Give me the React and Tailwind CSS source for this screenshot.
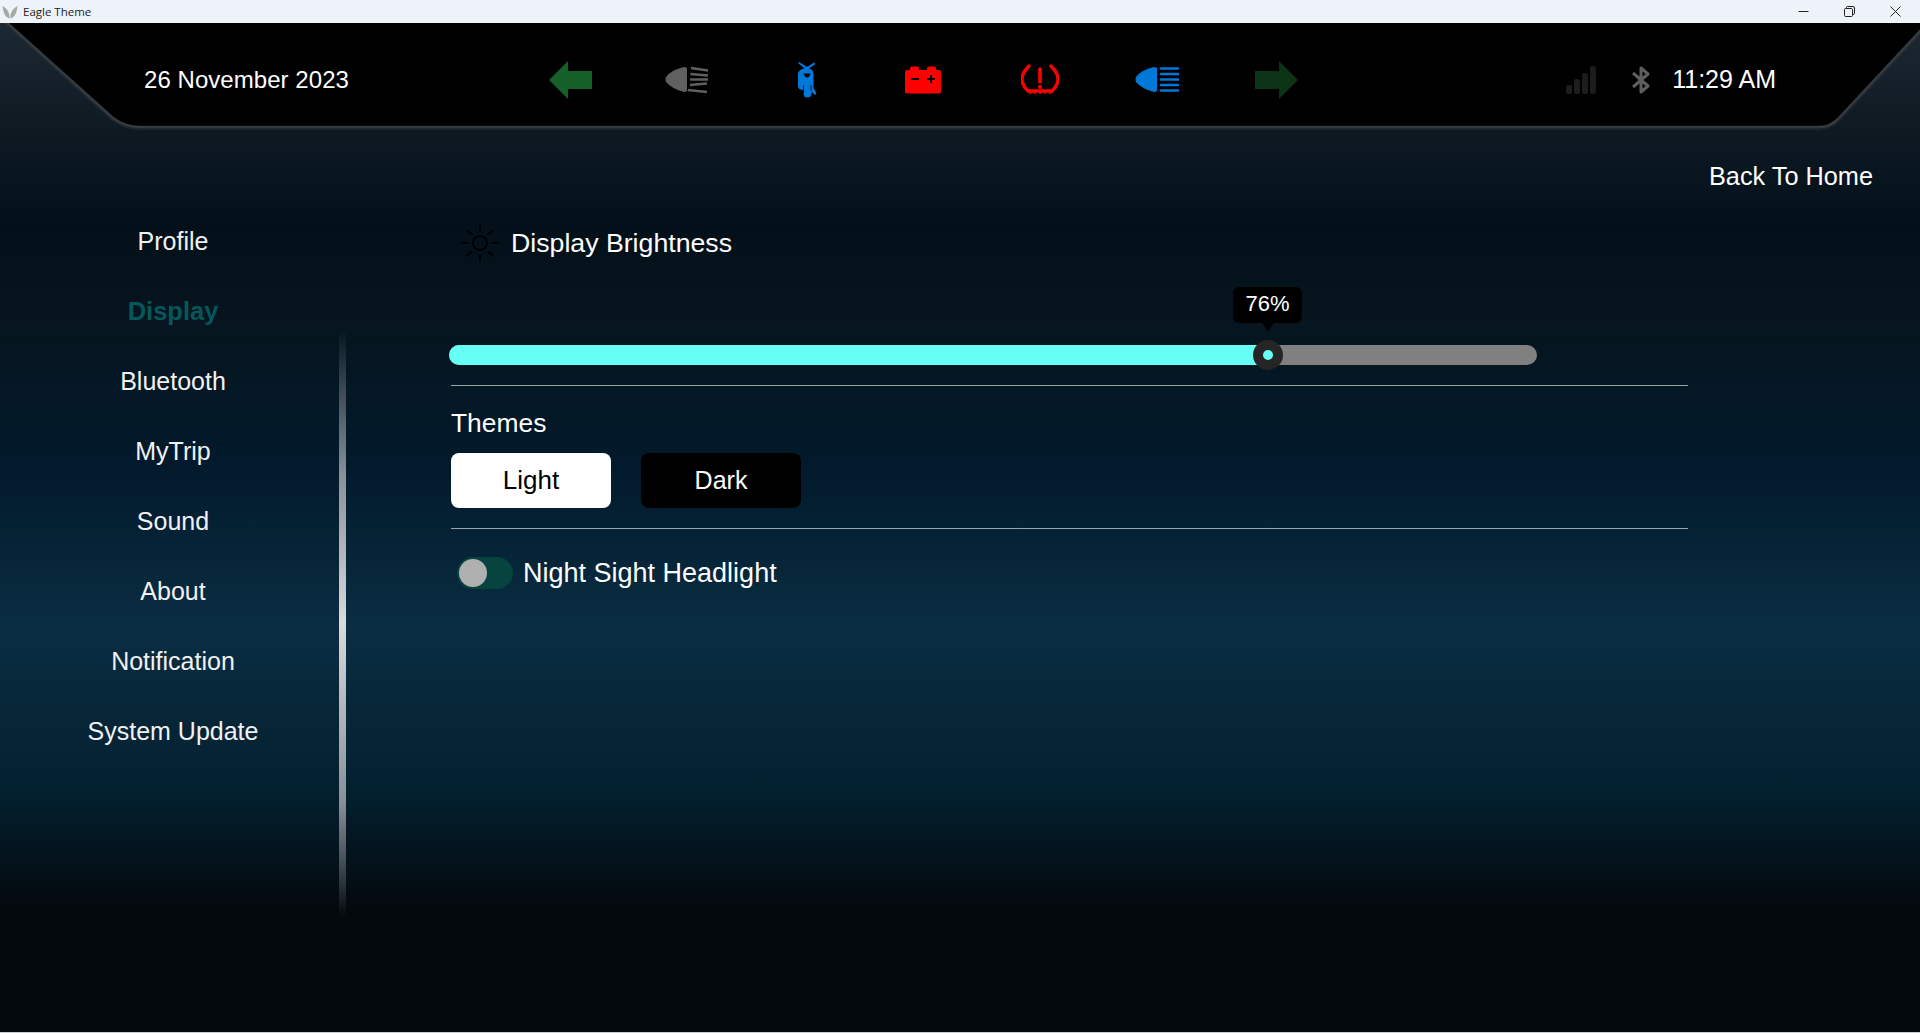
const navItems = ["Profile", "Display", "Bluetooth", "MyTrip", "Sound", "About", "Notification", "System Update"];

const TitleBar = () => (
  <div className="relative z-10 flex h-[23px] items-center justify-between bg-[#eef3fa]">
    <div className="flex items-center">
      <svg width="16" height="14" viewBox="0 0 16 14" className="ml-[2px]">
        <path d="M0.5 1 C1 3 1 7 3 10 C4 12 6 13 7.5 13.5 C8 9 6 4 0.5 1Z M15.5 1 C15 3 15 7 13 10 C12 12 10 13 8.5 13.5 C8 9 10 4 15.5 1Z" fill="#a4aaa6" />
      </svg>
      <span className="ml-[5px] font-['Open_Sans',sans-serif] text-[11.5px] text-[#222]">Eagle Theme</span>
    </div>
    <div className="mr-[19px] flex items-center gap-[35px]">
      <svg width="11" height="11" viewBox="0 0 11 11"><path d="M0.5 5.5H10.5" stroke="#222" strokeWidth="1" /></svg>
      <svg width="11" height="11" viewBox="0 0 11 11" fill="none" stroke="#222" strokeWidth="1">
        <rect x="0.5" y="2.5" width="8" height="8" rx="1" />
        <path d="M2.5 2.5V1.5Q2.5 0.5 3.5 0.5H9Q10.5 0.5 10.5 2V7.5Q10.5 8.5 9 8.5" />
      </svg>
      <svg width="11" height="11" viewBox="0 0 11 11"><path d="M0.5 0.5L10.5 10.5M10.5 0.5L0.5 10.5" stroke="#222" strokeWidth="1" /></svg>
    </div>
  </div>
);

const HeadlightIcon = ({ color, tilted }) => (
  <svg width="44" height="28" viewBox="0 0 44 28" fill={color}>
    <path d="M19 1 Q6 4 1 11 Q0 14 1 16 Q7 23 19 26 Q22 26 22 24 V3 Q22 1 19 1Z" />
    {tilted ? (
      <g stroke={color} strokeWidth="2.4">
        <path d="M26 2L43 4.5M25.5 8L43 9.5M25 13.5L43 13.5M25 19L42 17.5M23 24L42 26" />
      </g>
    ) : (
      <g stroke={color} strokeWidth="2.6" strokeLinecap="round">
        <path d="M26 2.5H43M26 8H43M26 13.5H43M26 19H43M26 24.5H43" />
      </g>
    )}
  </svg>
);

const StatusIcons = () => (
  <div className="ml-[200px] flex items-center">
    <svg width="43" height="38" viewBox="0 0 43 38"><path d="M0 19L19 0V10H43V28H19V38Z" fill="#156028" /></svg>
    <div className="ml-[73px] flex"><HeadlightIcon color="#606060" tilted /></div>
    <svg width="20" height="36" viewBox="0 0 20 36" className="ml-[88px]" fill="#0078d7">
      <path d="M1 1L2 0L10 5L17 0.5L18.5 2L12 6.5Q16.5 7.5 16.5 12V26L19.5 31L18 33L14.5 29.5V31Q14.5 35.5 10 35.5Q6.5 35.5 6.5 31V28Q1 28 1 24V12Q1 7.5 7.5 6.5Z" />
      <path d="M6.5 11.5H13.5Q12.5 15.5 10 15.5Q7.5 15.5 6.5 11.5Z" fill="#000" />
      <path d="M6.5 23V31M14 23V29" stroke="#000" strokeWidth="0.8" />
    </svg>
    <svg width="36" height="28" viewBox="0 0 36 28" className="ml-[88px]">
      <path d="M2 4H5V2.5Q5 0.5 7 0.5H12Q14 0.5 14 2.5V4H22V2.5Q22 0.5 24 0.5H29Q31 0.5 31 2.5V4H34Q36 4 36 6V25.5Q36 27.5 34 27.5H2Q0 27.5 0 25.5V6Q0 4 2 4Z" fill="#ff0000" />
      <path d="M6 13H14M22 13H30M26 9V17" stroke="#000" strokeWidth="2" />
    </svg>
    <svg width="38" height="32" viewBox="0 0 38 32" className="ml-[80px]" fill="none" stroke="#ff0000">
      <path d="M8 2Q1 9 1 15Q1 21 7 27H31Q37 21 37 15Q37 9 30 2" strokeWidth="3.4" strokeLinecap="round" />
      <path d="M19 5V18" strokeWidth="3.6" strokeLinecap="round" />
      <circle cx="19" cy="23" r="2" fill="#ff0000" stroke="none" />
      <path d="M9 27V30M14 27V30M19 27V30M24 27V30M29 27V30" strokeWidth="1.6" />
    </svg>
    <div className="ml-[76px] flex"><HeadlightIcon color="#0078d7" /></div>
    <svg width="43" height="38" viewBox="0 0 43 38" className="ml-[76px]"><path d="M43 19L24 0V10H0V28H24V38Z" fill="#0d3316" /></svg>
  </div>
);

const Header = () => (
  <header className="relative flex h-[103px] items-center pt-[10px]">
    <svg className="absolute inset-0 h-full w-full overflow-visible" viewBox="0 0 1920 103" preserveAspectRatio="none">
      <path d="M5 -2L113 95Q125 104 140 104H1820Q1830 104 1838 96L1922 6V-2Z" fill="none" stroke="#2a3037" strokeWidth="6" opacity="0.5" />
      <path d="M5 -2L113 95Q125 104 140 104H1820Q1830 104 1838 96L1922 6V-2Z" fill="#000" stroke="#343a40" strokeWidth="2.5" />
    </svg>
    <span className="relative ml-[144px] w-[205px] whitespace-nowrap text-[24px] tracking-[0.05px] text-white">26 November 2023</span>
    <div className="relative"><StatusIcons /></div>
    <div className="relative ml-auto mr-[144px] flex items-center">
      <div className="flex h-[28px] items-end gap-[2px]">
        <span className="h-[9px] w-[6px] rounded-[2px] bg-[#1c1c1c]" />
        <span className="h-[15px] w-[6px] rounded-[2px] bg-[#1c1c1c]" />
        <span className="h-[21px] w-[6px] rounded-[2px] bg-[#1c1c1c]" />
        <span className="h-[28px] w-[6px] rounded-[2px] bg-[#1c1c1c]" />
      </div>
      <svg width="20" height="28" viewBox="0 0 20 28" fill="none" stroke="#5f5f5f" strokeWidth="3" className="ml-[35px]">
        <path d="M2 7L17 20L10 26V2L17 8L2 21" strokeLinejoin="round" />
      </svg>
      <span className="ml-[21px] text-[25px] text-white">11:29 AM</span>
    </div>
  </header>
);

const Sidebar = () => (
  <aside className="flex w-[339px] shrink-0 items-start">
    <nav className="mt-[81px] flex w-[346px] shrink-0 flex-col">
      {navItems.map((item) => (
        <div
          key={item}
          className={
            item === "Display"
              ? "flex h-[70px] items-center justify-center pb-[2px] text-[25.5px] font-bold text-[#04575a]"
              : "flex h-[70px] items-center justify-center text-[25px] text-[#f1f1f1]"
          }
        >
          {item}
        </div>
      ))}
    </nav>
  </aside>
);

const BrightnessSlider = () => (
  <div className="relative ml-[3px] mt-[82px] h-[20px] w-[1088px] rounded-full bg-[#808080]">
    <div className="h-full w-[819px] rounded-l-full bg-[#66fff5]" />
    <div className="absolute left-[784px] top-[-58px] flex h-[36px] w-[69px] items-center justify-center rounded-[6px] bg-black pb-[2px] text-[22px] text-white">
      76%
      <span className="absolute top-[35px] h-0 w-0 border-x-[6px] border-t-[10px] border-x-transparent border-t-black" />
    </div>
    <div className="absolute left-[804px] top-[-5px] flex h-[30px] w-[30px] items-center justify-center rounded-full bg-[#252525]">
      <span className="h-[10px] w-[10px] rounded-full bg-[#66fff5]" />
    </div>
  </div>
);

const App = () => (
  <div className="flex h-[1033px] w-full flex-col overflow-hidden font-['Liberation_Sans',sans-serif]">
    <TitleBar />
    <div className="flex flex-1 flex-col bg-[linear-gradient(180deg,#1c2833_0%,#0f1a23_10%,#03101a_20%,#06151f_30%,#021a2c_44%,#0a2d42_60%,#03202f_76%,#04090e_87.5%,#04090d_100%)]">
      <Header />
      <div className="flex flex-1">
        <Sidebar />
        <div className="mt-[204px] h-[587px] w-[7px] shrink-0 bg-[linear-gradient(180deg,transparent_0%,#8b9199_25%,#d8dadc_50%,#8b9199_80%,transparent_100%)]" />
        <main className="flex-1 pl-[100px]">
          <div className="mr-[47px] mt-[32px] flex justify-end">
            <span className="text-[25.3px] text-white">Back To Home</span>
          </div>
          <div className="mt-[27px] flex items-center">
            <svg width="40" height="40" viewBox="0 0 24 24" fill="none" stroke="#000" strokeWidth="1.2" strokeLinecap="round" className="ml-[14px]">
              <circle cx="12" cy="12" r="4.2" />
              <path d="M12 1.5V4.5M12 19.5V22.5M1.5 12H4.5M19.5 12H22.5M4.6 4.6L6.7 6.7M17.3 17.3L19.4 19.4M4.6 19.4L6.7 17.3M17.3 6.7L19.4 4.6" />
            </svg>
            <span className="ml-[11px] text-[26.7px] text-white">Display Brightness</span>
          </div>
          <BrightnessSlider />
          <div className="ml-[5px] mt-[20px] h-px w-[1237px] bg-[#9aa3a8]" />
          <div className="ml-[5px] mt-[22px] text-[26.4px] leading-[30px] text-white">Themes</div>
          <div className="ml-[5px] mt-[15px] flex gap-[30px]">
            <button className="h-[55px] w-[160px] rounded-[8px] bg-white text-[26px] text-black">Light</button>
            <button className="h-[55px] w-[160px] rounded-[8px] bg-black text-[25px] text-white">Dark</button>
          </div>
          <div className="ml-[5px] mt-[20px] h-px w-[1237px] bg-[#9aa3a8]" />
          <div className="ml-[11px] mt-[24px] flex items-center">
            <div className="flex h-[32px] w-[56px] items-center rounded-full bg-[#07433f] pl-[2px]">
              <span className="h-[28px] w-[28px] rounded-full bg-[#b0b0b0]" />
            </div>
            <span className="ml-[10px] text-[27px] text-white">Night Sight Headlight</span>
          </div>
        </main>
      </div>
      <div className="h-px bg-[#c9ced2]" />
    </div>
  </div>
);

export default App;
